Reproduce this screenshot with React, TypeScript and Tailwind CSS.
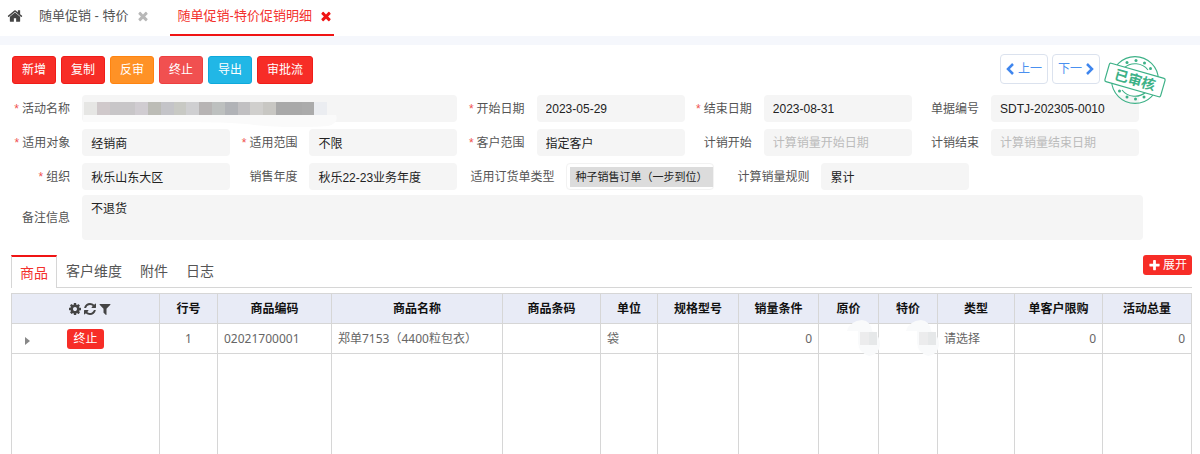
import { useId } from "react";
import type { ReactNode } from "react";

const ICONS = {
  home: "M1472 992v480q0 26-19 45t-45 19h-384v-384h-256v384h-384q-26 0-45-19t-19-45v-480q0-1 .5-3t.5-3l575-474 575 474q1 2 1 6zm223-69l-62 74q-8 9-21 11h-3q-13 0-21-7l-692-577-692 577q-12 8-24 7-13-2-21-11l-62-74q-8-10-7-23.5t11-21.5l719-599q32-26 76-26t76 26l244 204v-195q0-14 9-23t23-9h192q14 0 23 9t9 23v408l219 182q10 8 11 21.5t-7 23.5z",
  times:
    "M1490 1322q0 40-28 68l-136 136q-28 28-68 28t-68-28l-294-294-294 294q-28 28-68 28t-68-28l-136-136q-28-28-28-68t28-68l294-294-294-294q-28-28-28-68t28-68l136-136q28-28 68-28t68 28l294 294 294-294q28-28 68-28t68 28l136 136q28 28 28 68t-28 68l-294 294 294 294q28 28 28 68z",
  cog: "M1152 896q0-106-75-181t-181-75-181 75-75 181 75 181 181 75 181-75 75-181zm512-109v222q0 12-8 23t-20 13l-185 28q-19 54-39 91 35 50 107 138 10 12 10 25t-9 23q-27 37-99 108t-94 71q-12 0-26-9l-138-108q-44 23-91 38-16 136-29 186-7 28-36 28h-222q-14 0-24.5-8.5t-11.5-21.5l-28-184q-49-16-90-37l-141 107q-10 9-25 9-14 0-25-11-126-114-165-168-7-10-7-23 0-12 8-23 15-21 51-66.5t54-70.5q-27-50-41-99l-183-27q-13-2-21-12.5t-8-23.5v-222q0-12 8-23t19-13l186-28q14-46 39-92-40-57-107-138-10-12-10-24 0-10 9-23 26-36 98.5-107.5t94.5-71.5q13 0 26 10l138 107q44-23 91-38 16-136 29-186 7-28 36-28h222q14 0 24.5 8.5t11.5 21.5l28 184q49 16 90 37l142-107q9-9 24-9 13 0 25 10 129 119 165 170 7 8 7 22 0 12-8 23-15 21-51 66.5t-54 70.5q26 50 41 98l183 28q13 2 21 12.5t8 23.5z",
  refresh:
    "M1639 1056q0 5-1 7-64 268-268 434.5t-478 166.5q-146 0-282.5-55t-243.5-157l-129 129q-19 19-45 19t-45-19-19-45v-448q0-26 19-45t45-19h448q26 0 45 19t19 45-19 45l-137 137q71 66 161 102t187 36q134 0 250-65t186-179q11-17 53-117 8-23 30-23h192q13 0 22.5 9.5t9.5 22.5zm25-800v448q0 26-19 45t-45 19h-448q-26 0-45-19t-19-45 19-45l138-138q-148-137-349-137-134 0-250 65t-186 179q-11 17-53 117-8 23-30 23h-199q-13 0-22.5-9.5t-9.5-22.5v-7q65-268 270-434.5t480-166.5q146 0 284 55.5t245 156.5l130-129q19-19 45-19t45 19 19 45z",
  filter:
    "M1595 295q17 41-14 70l-493 493v742q0 42-39 59-13 5-25 5-27 0-45-19l-256-256q-19-19-19-45v-486l-493-493q-31-29-14-70 17-39 59-39h1280q42 0 59 39z",
  plus: "M1600 736v192q0 40-28 68t-68 28h-416v416q0 40-28 68t-68 28h-192q-40 0-68-28t-28-68v-416h-416q-40 0-68-28t-28-68v-192q0-40 28-68t68-28h416v-416q0-40 28-68t68-28h192q40 0 68 28t28 68v416h416q40 0 68 28t28 68z",
};

function Icon({ name, className }: { name: keyof typeof ICONS; className: string }) {
  return (
    <svg viewBox="0 0 1792 1792" fill="currentColor" aria-hidden="true" className={className}>
      <path d={ICONS[name]} />
    </svg>
  );
}

const inputClass =
  "block h-[27px] w-full min-w-0 rounded-[4px] bg-[#f5f5f5] px-[9px] text-xs text-[#222] outline-none placeholder:text-[#bbb]";

function FieldLabel({ id, required, children }: { id: string; required?: boolean; children: ReactNode }) {
  return (
    <label htmlFor={id} className="flex flex-1 justify-end gap-[3px] whitespace-nowrap text-[#555]">
      {required && <span className="text-[#f0524f]">*</span>}
      <span>{children}</span>
    </label>
  );
}

type FieldProps = { label: string; value?: string; placeholder?: string; required?: boolean; className?: string };

function Field({ label, value, placeholder, required, className = "" }: FieldProps) {
  const id = useId();
  return (
    <div className={`flex items-center gap-3 ${className}`}>
      <FieldLabel id={id} required={required}>
        {label}
      </FieldLabel>
      <div className="w-[148px] shrink-0">
        <input id={id} defaultValue={value} placeholder={placeholder} className={inputClass} />
      </div>
    </div>
  );
}

const MOSAIC = [
  "bg-[#e6e6e4]", "bg-[#d0c9cb]", "bg-[#c8c6c8]", "bg-[#c8c6c8]", "bg-[#d0ccd1]", "bg-[#bcbcb6]", "bg-[#c4c4c8]",
  "bg-[#c8c9c4]", "bg-[#cfcfd1]", "bg-[#b7b4b4]", "bg-[#bdc0bf]", "bg-[#b1b3b7]", "bg-[#c1c0c2]", "bg-[#d0cfcd]",
  "bg-[#c8c7c3]", "bg-[#a9a9a9]", "bg-[#a9a9a9]", "bg-[#ababab]", "bg-[#ebedf1]",
];

function NameField() {
  const id = useId();
  return (
    <div className="col-span-2 flex items-center gap-3">
      <div className="flex w-[67px] shrink-0">
        <FieldLabel id={id} required>
          活动名称
        </FieldLabel>
      </div>
      <div className="relative min-w-0 flex-1">
        <input id={id} className={inputClass} />
        <svg className="absolute top-5 left-0 h-3 w-64" viewBox="0 0 256 12" aria-hidden="true">
          <path d="M1 0H254Q257 8 246 11Q200 14 165 9Q140 7 110 7H1Z" fill="#fafafa" />
        </svg>
        <div className="absolute top-[7px] left-[2px] flex h-[13px] w-[243px]" aria-hidden="true">
          {MOSAIC.map((color, i) => (
            <span key={i} className={`flex-1 ${color}`} />
          ))}
        </div>
      </div>
    </div>
  );
}

function OrderTypeField() {
  const id = useId();
  return (
    <div className="flex w-[257px] items-center gap-3">
      <FieldLabel id={id}>适用订货单类型</FieldLabel>
      <div className="flex h-[27px] w-[148px] shrink-0 items-center rounded-[4px] border border-[#f2f2f2] pl-[3px]">
        <output id={id} className="h-5 flex-1 bg-[#dcdcdc] px-[5px] text-[11px] leading-5 whitespace-nowrap text-[#222]">
          种子销售订单（一步到位）
        </output>
      </div>
    </div>
  );
}

function Stamp() {
  return (
    <svg viewBox="0 0 64 50" className="absolute top-px -right-[67px] z-10 h-[50px] w-16" role="img" aria-label="已审核">
      <g fill="none" stroke="#3db187" strokeWidth="1.1">
        <circle cx="32" cy="25" r="23.4" />
        <path d="M21 13A16.500 16.500 0 0 1 45 15M19 35A16.500 16.500 0 0 0 43 37" />
      </g>
      <g fill="#3db187">
        <circle cx="24" cy="7.500" r="1.500" />
        <circle cx="33" cy="5.500" r="1.500" />
        <circle cx="41.500" cy="8" r="1.500" />
        <circle cx="47.500" cy="13.500" r="1.500" />
        <circle cx="16.500" cy="36" r="1.500" />
        <circle cx="24" cy="42" r="1.500" />
        <circle cx="32.500" cy="44" r="1.500" />
        <circle cx="41" cy="42" r="1.500" />
      </g>
      <g transform="rotate(16 32 25)">
        <rect x="3" y="15.500" width="58" height="19" rx="1.500" fill="#fff" stroke="#3db187" strokeWidth="1.200" />
        <text x="32" y="30" textAnchor="middle" fontSize="14" fontWeight="700" fill="#3db187">
          已审核
        </text>
      </g>
    </svg>
  );
}

const ACTIONS = [
  { label: "新增", color: "bg-[#f72d27] border-[#f01c18]" },
  { label: "复制", color: "bg-[#f72d27] border-[#f01c18]" },
  { label: "反审", color: "bg-[#ff9226] border-[#ff8410]" },
  { label: "终止", color: "bg-[#f15050] border-[#ee3f3f]" },
  { label: "导出", color: "bg-[#21b7e6] border-[#0fa9db]" },
  { label: "审批流", color: "bg-[#f72d27] border-[#f01c18]" },
];

const COLUMNS = [
  { title: "行号", width: "w-[58px]", value: "1", align: "text-center" },
  { title: "商品编码", width: "w-[114px]", value: "02021700001", align: "text-left" },
  { title: "商品名称", width: "w-[171px]", value: "郑单7153（4400粒包衣）", align: "text-left" },
  { title: "商品条码", width: "w-[98px]", value: "", align: "text-left" },
  { title: "单位", width: "w-[57px]", value: "袋", align: "text-left" },
  { title: "规格型号", width: "w-[81px]", value: "", align: "text-left" },
  { title: "销量条件", width: "w-[80px]", value: "0", align: "text-right" },
  { title: "原价", width: "w-[60px]", value: "", align: "text-right", masked: true },
  { title: "特价", width: "w-[59px]", value: "", align: "text-right", masked: true },
  { title: "类型", width: "w-[77px]", value: "请选择", align: "text-left" },
  { title: "单客户限购", width: "w-[88px]", value: "0", align: "text-right" },
  { title: "活动总量", width: "w-[89px]", value: "0", align: "text-right" },
];

function Mask() {
  return (
    <svg className="absolute -top-1 -right-[3px] z-10 h-9 w-9" viewBox="0 0 36 36" aria-hidden="true">
      <path d="M2 11Q5 1 17 0Q26 1 27 11Q36 16 35 26Q33 35 24 36Q14 33 13 23L13 11Z" fill="#f9fafb" />
      <path d="M15 12H24V25H15Z" fill="#ececed" />
      <path d="M24 12H32V25H24Z" fill="#e6e8e9" />
    </svg>
  );
}

const cell = "border border-[#d6d6d6]";

export default function App() {
  const remarkId = useId();
  return (
    <div className="min-h-screen bg-white font-['Liberation_Sans','Noto_Sans_CJK_SC',sans-serif] text-xs text-[#555]">
      <nav className="flex h-9 items-stretch text-[13px]">
        <a href="#home" aria-label="首页" className="flex w-[29px] items-center pb-1 pl-[7px] text-[#444]">
          <Icon name="home" className="size-4" />
        </a>
        <div className="flex items-center gap-[7px] pb-1 pl-[10px]">
          <a href="#promotions">随单促销 - 特价</a>
          <button type="button" aria-label="关闭 随单促销 - 特价" className="text-[#b8b8b8]">
            <Icon name="times" className="size-[14px]" />
          </button>
        </div>
        <div className="ml-5 flex items-center gap-[7px] border-b-2 border-[#f01414] pr-px pb-[2px] pl-[8px] text-[#f3302c]">
          <a href="#detail">随单促销-特价促销明细</a>
          <button type="button" aria-label="关闭 随单促销-特价促销明细" className="text-[#f01414]">
            <Icon name="times" className="size-[14px]" />
          </button>
        </div>
      </nav>
      <div className="h-[9px] bg-[#f5f7fc]" />

      <div className="flex items-start justify-between pt-[9px] pr-[100px] pl-3">
        <div className="flex gap-[5px] pt-[2px]">
          {ACTIONS.map((a, i) => (
            <button key={i} type="button" className={`h-7 rounded-[3px] border px-[9px] text-white ${a.color}`}>
              {a.label}
            </button>
          ))}
        </div>
        <div className="relative flex gap-1">
          <button
            type="button"
            className="flex h-[30px] w-12 items-center justify-center gap-1 rounded-[4px] border border-[#dbe2ee] text-[#4a90f0]"
          >
            <svg viewBox="0 0 8 12" className="h-3 w-2" fill="none" stroke="#3f86ee" strokeWidth="2.5" aria-hidden="true">
              <path d="M7 1L2 6L7 11" />
            </svg>
            上一
          </button>
          <button
            type="button"
            className="flex h-[30px] w-12 items-center justify-center gap-1 rounded-[4px] border border-[#dbe2ee] text-[#4a90f0]"
          >
            下一
            <svg viewBox="0 0 8 12" className="h-3 w-2" fill="none" stroke="#3f86ee" strokeWidth="2.5" aria-hidden="true">
              <path d="M1 1L6 6L1 11" />
            </svg>
          </button>
          <Stamp />
        </div>
      </div>

      <form className="pt-[11px] pr-[61px] pl-[3px]">
        <div className="grid grid-cols-5 gap-y-[7px]">
          <NameField />
          <Field label="开始日期" value="2023-05-29" required />
          <Field label="结束日期" value="2023-08-31" required />
          <Field label="单据编号" value="SDTJ-202305-0010" />
          <Field label="适用对象" value="经销商" required />
          <Field label="适用范围" value="不限" required />
          <Field label="客户范围" value="指定客户" required />
          <Field label="计销开始" placeholder="计算销量开始日期" />
          <Field label="计销结束" placeholder="计算销量结束日期" />
          <Field label="组织" value="秋乐山东大区" required />
          <Field label="销售年度" value="秋乐22-23业务年度" />
          <div className="col-span-3 flex">
            <OrderTypeField />
            <Field label="计算销量规则" value="累计" className="w-[255px]" />
          </div>
        </div>
        <div className="-mr-1 flex items-center gap-3 pt-[5px]">
          <div className="flex w-[67px] shrink-0">
            <FieldLabel id={remarkId}>备注信息</FieldLabel>
          </div>
          <textarea
            id={remarkId}
            defaultValue="不退货"
            className="block h-[45px] min-w-0 flex-1 resize-none rounded-[4px] bg-[#f5f5f5] px-[9px] py-[6px] text-xs text-[#222] outline-none"
          />
        </div>
      </form>

      <div className="mt-[15px] mr-2 ml-[11px] flex items-start border-b border-[#d6d6d6] text-sm">
        <div role="tablist" className="flex h-8 flex-1 items-stretch">
          <button
            type="button"
            role="tab"
            aria-selected="true"
            className="-mb-px border-x border-t-2 border-x-[#d6d6d6] border-t-[#f01414] bg-white px-2 text-[#f3302c]"
          >
            商品
          </button>
          <button type="button" role="tab" aria-selected="false" className="px-[9px]">
            客户维度
          </button>
          <button type="button" role="tab" aria-selected="false" className="px-[9px]">
            附件
          </button>
          <button type="button" role="tab" aria-selected="false" className="px-[9px]">
            日志
          </button>
        </div>
        <button
          type="button"
          className="flex h-5 items-center gap-[2px] rounded-[3px] bg-[#f72d27] px-[5px] text-xs text-white"
        >
          <Icon name="plus" className="size-[13px]" />
          展开
        </button>
      </div>

      <div className="mt-[5px] mr-2 ml-[11px]">
        <table className="w-full table-fixed border-collapse font-['Noto_Sans','Noto_Sans_CJK_SC',sans-serif]">
          <thead>
            <tr className="h-[30px] bg-[#e8ebf6] text-[#111]">
              <th className={`${cell} w-[148px]`}>
                <div className="flex items-center justify-center gap-px pl-2 text-[#444]">
                  <button type="button" aria-label="设置">
                    <Icon name="cog" className="size-[14px]" />
                  </button>
                  <button type="button" aria-label="刷新">
                    <Icon name="refresh" className="size-[14px]" />
                  </button>
                  <button type="button" aria-label="筛选">
                    <Icon name="filter" className="size-[14px]" />
                  </button>
                </div>
              </th>
              {COLUMNS.map((c) => (
                <th key={c.title} className={`${cell} ${c.width} whitespace-nowrap`}>
                  {c.title}
                </th>
              ))}
            </tr>
          </thead>
          <tbody>
            <tr className="h-[30px] text-[#666]">
              <td className={cell}>
                <div className="flex items-center">
                  <button type="button" aria-label="展开行" className="flex w-[30px] justify-center pt-1">
                    <svg viewBox="0 0 5 8" className="h-2 w-[5px]" fill="#888" aria-hidden="true">
                      <path d="M0 0L5 4L0 8Z" />
                    </svg>
                  </button>
                  <div className="flex flex-1 justify-center pr-[30px]">
                    <button type="button" className="h-5 rounded-[3px] bg-[#f72d27] px-[6px] text-white">
                      终止
                    </button>
                  </div>
                </div>
              </td>
              {COLUMNS.map((c) => (
                <td
                  key={c.title}
                  className={`${cell} relative whitespace-nowrap ${c.align} ${c.align === "text-center" ? "" : "px-[6px]"}`}
                >
                  {c.masked ? <Mask /> : c.value}
                </td>
              ))}
            </tr>
            <tr className="h-[101px]">
              <td className="border-x border-[#d6d6d6]" />
              {COLUMNS.map((c) => (
                <td key={c.title} className="border-x border-[#d6d6d6]" />
              ))}
            </tr>
          </tbody>
        </table>
      </div>
    </div>
  );
}
